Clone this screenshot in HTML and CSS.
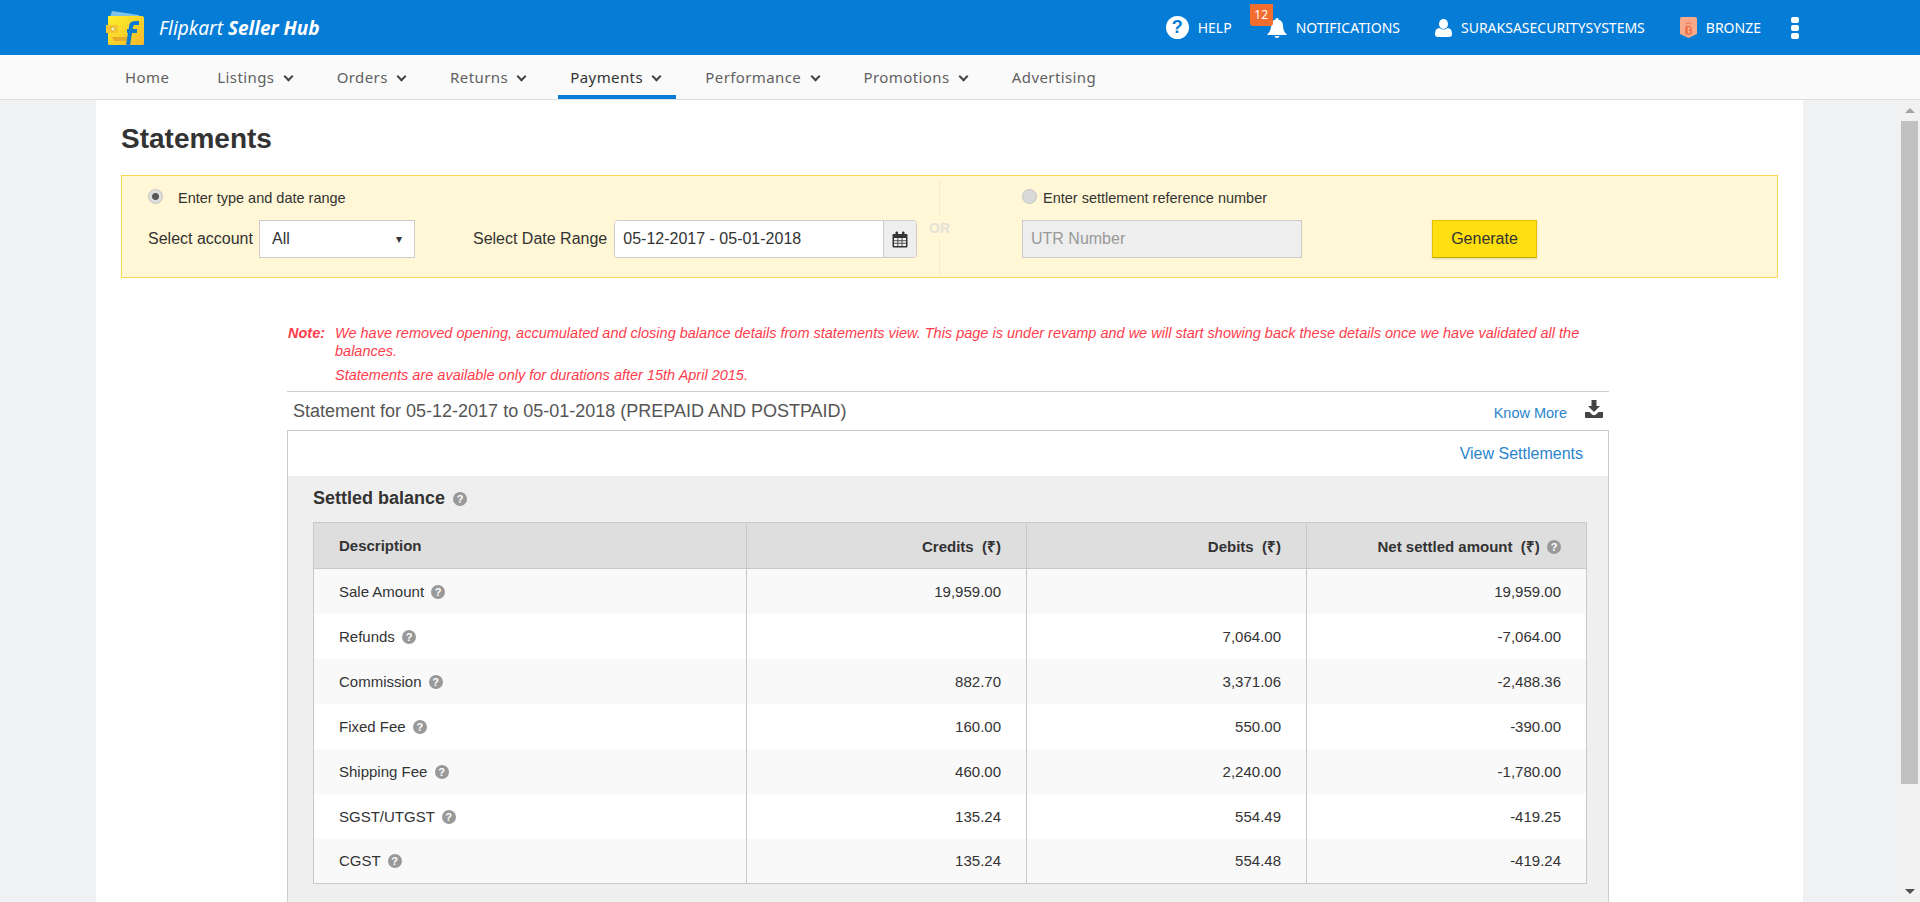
FILE: index.html
```html
<!DOCTYPE html>
<html lang="en">

<head>
    <meta charset="UTF-8">
    <title>Flipkart Seller Hub - Statements</title>
    <link rel="stylesheet" href="styles.css">
</head>

<body>
    <header class="topbar">
        <a class="brand" href="#">
            <svg class="brand-logo" viewBox="0 0 39 36" width="39" height="36">
                <defs>
                    <linearGradient id="wallet" x1="0" y1="0" x2="1" y2="1">
                        <stop offset="0" stop-color="#fff22a" />
                        <stop offset="1" stop-color="#f4b62b" />
                    </linearGradient>
                </defs>
                <path d="M4 7 L6 1 L33 5 L33 8 Z" fill="#7fc4e8" />
                <path d="M2 6 H36 Q38 6 38 8 V34 Q38 35 36 35 H3 Q2 35 2 33 Z" fill="url(#wallet)" />
                <path d="M0 15 H11 Q12 15 12 16 V22 Q12 23 11 23 H0 Z" fill="#f7c52e" />
                <circle cx="7" cy="19" r="2" fill="#fff6b8" stroke="#b99a2c" stroke-width=".6" />
                <path d="M6 27 H22 L20 31 H8 Z" fill="#e7a92a" />
                <path d="M33 13 H29 Q25 13 25 17 L22 35 M21 21 H31" fill="none" stroke="#0a7bd0" stroke-width="4" />
            </svg>
            <span class="brand-name">Flipkart <b>Seller Hub</b></span>
        </a>
        <nav class="user-menu">
            <a class="user-item" href="#">
                <span class="help-icon">?</span>
                HELP
            </a>
            <a class="user-item notif" href="#">
                <span class="notif-count">12</span>
                <svg viewBox="0 0 20 20" width="20" height="20">
                    <path d="M10 0 Q11.6 0 11.8 1.8 Q16 3 16 8 Q16 13 19.5 16 V17 H.5 V16 Q4 13 4 8 Q4 3 8.2 1.8 Q8.4 0 10 0 Z M7.5 18 H12.5 Q12 20 10 20 Q8 20 7.5 18 Z" fill="#fff" />
                </svg>
                NOTIFICATIONS
            </a>
            <a class="user-item" href="#">
                <svg viewBox="0 0 17 18" width="17" height="18">
                    <ellipse cx="8.500" cy="5" rx="4.500" ry="5" fill="#fff" />
                    <path d="M0 15 Q0 9 4.500 9 Q8.500 12 12.500 9 Q17 9 17 15 Q17 18 14 18 H3 Q0 18 0 15 Z" fill="#fff" />
                </svg>
                SURAKSASECURITYSYSTEMS
            </a>
            <a class="user-item" href="#">
                <svg viewBox="0 0 17 21" width="17" height="21">
                    <path d="M2 0 H15 Q17 0 17 2 V17 L8.500 21 L0 17 V2 Q0 0 2 0 Z" fill="#f7a98a" />
                    <path d="M5.500 7 Q8.500 4.500 11.500 7" fill="none" stroke="#e8734a" />
                    <path d="M6 9.500 H9.500 Q11 9.500 11 11.500 Q11 13 9.500 13 Q11.500 13 11.500 15 Q11.500 17 9.500 17 H6 Z M7 10.500 V16" fill="none" stroke="#e8542a" />
                </svg>
                BRONZE
            </a>
            <a class="dots" href="#"><i></i><i></i><i></i></a>
        </nav>
    </header>

    <nav class="mainnav">
        <a class="nav-link nav-home" href="#">Home</a>
        <a class="nav-link" href="#">Listings <span class="chev"></span></a>
        <a class="nav-link" href="#">Orders <span class="chev"></span></a>
        <a class="nav-link" href="#">Returns <span class="chev"></span></a>
        <a class="nav-link active" href="#">Payments <span class="chev"></span></a>
        <a class="nav-link" href="#">Performance <span class="chev"></span></a>
        <a class="nav-link" href="#">Promotions <span class="chev"></span></a>
        <a class="nav-link" href="#">Advertising</a>
    </nav>

    <div class="viewport">
        <main class="page">
            <h1 class="page-title">Statements</h1>

            <section class="filter-box">
                <div class="filter-left">
                    <label class="radio-row"><input type="radio" name="mode" checked> Enter type and date range</label>
                    <div class="filter-fields">
                        <span class="field-label">Select account</span>
                        <div class="select-box">All <span class="select-arrow">▾</span></div>
                        <span class="field-label date-label">Select Date Range</span>
                        <div class="date-group">
                            <input class="date-input" type="text" value="05-12-2017 - 05-01-2018">
                            <span class="date-addon">
                                <svg viewBox="0 0 16 17" width="16" height="17">
                                    <path d="M1.500 3 H14.500 Q15.500 3 15.500 4 V15.500 Q15.500 16.500 14.500 16.500 H1.500 Q.5 16.500 .5 15.500 V4 Q.5 3 1.500 3 Z" fill="#333" />
                                    <path d="M2 7 H14 V15 H2 Z" fill="#eee" />
                                    <path d="M5.800 7 V15 M10 7 V15 M2 9.700 H14 M2 12.300 H14" stroke="#333" stroke-width=".8" />
                                    <rect x="3.500" y="0.500" width="2.500" height="4.500" rx="1" fill="#333" />
                                    <rect x="10" y="0.500" width="2.500" height="4.500" rx="1" fill="#333" />
                                </svg>
                            </span>
                        </div>
                    </div>
                </div>

                <div class="or-split"><span>OR</span></div>

                <div class="filter-right">
                    <label class="radio-row radio-tight"><input type="radio" name="mode"> Enter settlement reference number</label>
                    <input class="utr-input" type="text" placeholder="UTR Number">
                </div>

                <button class="generate-btn" type="button">Generate</button>
            </section>

            <section class="statement">
                <div class="notes">
                    <strong class="note-tag">Note:</strong>
                    <div class="note-text">
                        <p>We have removed opening, accumulated and closing balance details from statements view. This page is under revamp and we will start showing back these details once we have validated all the balances.</p>
                        <p class="note-second">Statements are available only for durations after 15th April 2015.</p>
                    </div>
                </div>

                <div class="statement-head">
                    <span class="statement-title">Statement for 05-12-2017 to 05-01-2018 (PREPAID AND POSTPAID)</span>
                    <a class="know-more" href="#">Know More</a>
                    <svg class="download-icon" viewBox="0 0 18 18" width="18" height="18">
                        <path d="M6.500 0 H11.500 V6 H15 L9 12 L3 6 H6.500 Z" fill="#444" />
                        <path d="M0 12 H4.500 L7 14.500 Q9 16 11 14.500 L13.500 12 H18 V17 Q18 18 17 18 H1 Q0 18 0 17 Z" fill="#444" />
                    </svg>
                </div>

                <div class="card">
                    <div class="card-links"><a href="#">View Settlements</a></div>
                    <div class="card-body">
                        <h2 class="balance-title">Settled balance <span class="hint">?</span></h2>
                        <table class="balance-table">
                            <colgroup>
                                <col class="col-desc">
                                <col class="col-num">
                                <col class="col-num">
                                <col class="col-num">
                            </colgroup>
                            <thead>
                                <tr>
                                    <th>Description</th>
                                    <th class="num">Credits&nbsp; (₹)</th>
                                    <th class="num">Debits&nbsp; (₹)</th>
                                    <th class="num">Net settled amount&nbsp; (₹) <span class="hint">?</span></th>
                                </tr>
                            </thead>
                            <tbody>
                                <tr>
                                    <td>Sale Amount <span class="hint">?</span></td>
                                    <td class="num">19,959.00</td>
                                    <td class="num"></td>
                                    <td class="num">19,959.00</td>
                                </tr>
                                <tr>
                                    <td>Refunds <span class="hint">?</span></td>
                                    <td class="num"></td>
                                    <td class="num">7,064.00</td>
                                    <td class="num">-7,064.00</td>
                                </tr>
                                <tr>
                                    <td>Commission <span class="hint">?</span></td>
                                    <td class="num">882.70</td>
                                    <td class="num">3,371.06</td>
                                    <td class="num">-2,488.36</td>
                                </tr>
                                <tr>
                                    <td>Fixed Fee <span class="hint">?</span></td>
                                    <td class="num">160.00</td>
                                    <td class="num">550.00</td>
                                    <td class="num">-390.00</td>
                                </tr>
                                <tr>
                                    <td>Shipping Fee <span class="hint">?</span></td>
                                    <td class="num">460.00</td>
                                    <td class="num">2,240.00</td>
                                    <td class="num">-1,780.00</td>
                                </tr>
                                <tr>
                                    <td>SGST/UTGST <span class="hint">?</span></td>
                                    <td class="num">135.24</td>
                                    <td class="num">554.49</td>
                                    <td class="num">-419.25</td>
                                </tr>
                                <tr>
                                    <td>CGST <span class="hint">?</span></td>
                                    <td class="num">135.24</td>
                                    <td class="num">554.48</td>
                                    <td class="num">-419.24</td>
                                </tr>
                            </tbody>
                        </table>
                    </div>
                </div>
            </section>
        </main>

        <div class="scroll-rail">
            <span class="arrow-up"></span>
            <span class="scroll-thumb"></span>
            <span class="arrow-down"></span>
        </div>
    </div>
</body>

</html>
```

FILE: styles.css
```css
* {
    box-sizing: border-box;
}

html,
body {
    margin: 0;
    padding: 0;
    height: 100%;
    overflow: hidden;
}

body {
    background: #f0f1f3;
    color: #333;
    font-family: "Liberation Sans", Arial, sans-serif;
    font-size: 15px;
    display: flex;
    flex-direction: column;
}

a {
    text-decoration: none;
    color: inherit;
}

/* top blue bar */
.topbar {
    flex: none;
    height: 55px;
    background: #057cd6;
    color: #fff;
    display: flex;
    align-items: center;
    justify-content: space-between;
    padding: 0 121px 0 106px;
}

.brand {
    display: flex;
    align-items: center;
    gap: 14px;
}

.brand-logo {
    margin-top: 0;
}

.brand-name {
    font-family: "Noto Sans", sans-serif;
    font-style: italic;
    font-size: 19px;
}

.brand-name b {
    font-weight: 700;
}

.user-menu {
    display: flex;
    align-items: center;
    gap: 35px;
    font-family: "Noto Sans", sans-serif;
    font-size: 14px;
}

.user-item {
    display: flex;
    align-items: center;
    gap: 9px;
    position: relative;
}

.help-icon {
    width: 23px;
    height: 23px;
    border-radius: 50%;
    background: #fff;
    color: #057cd6;
    font: bold 18px/23px "Liberation Sans", sans-serif;
    text-align: center;
}

.notif-count {
    position: absolute;
    left: -17px;
    top: -14px;
    width: 23px;
    height: 22px;
    background: #f36d2f;
    border-radius: 0 0 3px 3px;
    font-size: 12px;
    line-height: 22px;
    text-align: center;
}

.dots {
    display: flex;
    flex-direction: column;
    gap: 2px;
    margin-left: -5px;
}

.dots i {
    width: 8px;
    height: 6px;
    border-radius: 2px;
    background: #fff;
}

/* second bar */
.mainnav {
    flex: none;
    height: 45px;
    background: #fafafa;
    border-bottom: 1px solid #ddd;
    display: flex;
    padding-left: 113px;
    gap: 17px;
    font-family: "Noto Sans", sans-serif;
    font-size: 15px;
    letter-spacing: .4px;
    color: #616161;
}

.nav-link {
    height: 44px;
    line-height: 44px;
    padding: 0 14px 0 12px;
    white-space: nowrap;
}

.nav-home {
    margin-right: 5px;
}

.nav-link.active {
    color: #333;
    border-bottom: 4px solid #057cd6;
}

.chev {
    display: inline-block;
    width: 7px;
    height: 7px;
    margin: 0 2px 3px 6px;
    border-right: 2px solid #444;
    border-bottom: 2px solid #444;
    transform: rotate(45deg);
}

/* page area */
.viewport {
    flex: 1;
    min-height: 0;
    display: flex;
    overflow: hidden;
}

.page {
    flex: none;
    width: 1707px;
    margin-left: 96px;
    margin-right: 95px;
    background: #fff;
    padding: 0 25px;
}

.page-title {
    margin: 0;
    padding-top: 22px;
    height: 75px;
    font-size: 28px;
    line-height: 34px;
    font-weight: bold;
}

.filter-box {
    height: 103px;
    background: #fff7d6;
    border: 1px solid #fdd751;
    display: flex;
    position: relative;
    padding-left: 26px;
}

.filter-left {
    width: 791px;
}

.radio-row {
    display: flex;
    align-items: center;
    height: 44px;
    font-size: 14.500px;
}

.radio-row input {
    appearance: none;
    width: 15px;
    height: 15px;
    margin: 0 15px 4px 0;
    border-radius: 50%;
    background: #d9d9d9;
    border: 1px solid #c4c4c4;
}

.radio-row input:checked {
    background: radial-gradient(circle, #555 0 3px, #dedede 4px);
}

.radio-tight input {
    margin-right: 6px;
}

.filter-fields {
    display: flex;
    align-items: center;
}

.field-label {
    font-size: 16px;
}

.select-box {
    width: 156px;
    height: 38px;
    margin-left: 6px;
    padding: 0 12px;
    background: #fff;
    border: 1px solid #ccc;
    display: flex;
    align-items: center;
    justify-content: space-between;
    font-size: 16px;
}

.select-arrow {
    font-size: 12px;
}

.date-label {
    margin-left: 58px;
}

.date-group {
    display: flex;
    width: 303px;
    height: 38px;
    margin-left: 7px;
    border: 1px solid #ccc;
    border-radius: 4px;
    overflow: hidden;
}

.date-input {
    flex: 1;
    min-width: 0;
    border: 0;
    padding: 0 8px;
    background: #fff;
    color: #333;
    font: 16px "Liberation Sans", sans-serif;
}

.date-addon {
    width: 33px;
    background: #eee;
    border-left: 1px solid #ccc;
    display: flex;
    align-items: center;
    justify-content: center;
}

.or-split {
    width: 1px;
    margin: 3px 0 3px 0;
    background: #f1ead0;
    position: relative;
}

.or-split span {
    position: absolute;
    left: -11px;
    top: 37px;
    width: 23px;
    padding: 4px 0;
    background: #fff7d6;
    color: #e4e2d8;
    font-size: 14px;
    font-weight: bold;
    text-align: center;
}

.filter-right {
    width: 410px;
    margin-left: 82px;
}

.utr-input {
    display: block;
    width: 280px;
    height: 38px;
    padding: 0 8px;
    background: #eee;
    border: 1px solid #ccc;
    font: 16px "Liberation Sans", sans-serif;
}

.utr-input::placeholder {
    color: #999;
}

.generate-btn {
    width: 105px;
    height: 38px;
    margin-top: 44px;
    background: #ffdf10;
    border: 1px solid #e4c000;
    border-bottom-color: #c9aa00;
    box-shadow: 0 1px 2px rgba(0, 0, 0, .15);
    color: #333;
    font: 16px "Liberation Sans", sans-serif;
}

.statement {
    margin: 0 169px 0 166px;
}

.notes {
    display: flex;
    padding-top: 46px;
    height: 113px;
    color: #ff3d4d;
    font-size: 14.500px;
    font-style: italic;
    line-height: 18px;
}

.note-tag {
    width: 48px;
    flex: none;
    padding-left: 1px;
}

.note-text {
    width: 1245px;
}

.note-text p {
    margin: 0;
}

.note-text .note-second {
    margin-top: 6px;
}

.statement-head {
    height: 39px;
    border-top: 1px solid #ccc;
    display: flex;
    align-items: center;
    padding: 0 6px 0 6px;
}

.statement-title {
    flex: 1;
    color: #555;
    font-size: 18px;
}

.know-more {
    color: #2a85cc;
    font-size: 14.500px;
    margin: 3px 18px 0 0;
}

.download-icon {
    margin-bottom: 4px;
}

.card {
    border: 1px solid #ccc;
}

.card-links {
    height: 45px;
    padding-right: 25px;
    text-align: right;
    line-height: 45px;
    font-size: 16px;
    color: #2a85cc;
}

.card-body {
    background: #efefef;
    padding: 0 25px 40px;
}

.balance-title {
    margin: 0;
    height: 46px;
    line-height: 44px;
    font-size: 18px;
    font-weight: bold;
}

.hint {
    display: inline-block;
    width: 14px;
    height: 14px;
    margin-left: 3px;
    border-radius: 50%;
    background: #999;
    color: #fff;
    font: bold 11px/14px "Liberation Sans", sans-serif;
    text-align: center;
    vertical-align: 1px;
}

.balance-table {
    width: 1274px;
    table-layout: fixed;
    border-collapse: collapse;
    border: 1px solid #c8c8c8;
    background: #fff;
    font-size: 15px;
}

.col-desc {
    width: 433px;
}

.col-num {
    width: 280px;
}

.balance-table th {
    height: 46px;
    padding: 0 25px;
    background: #dedede;
    border: 1px solid #c8c8c8;
    text-align: left;
}

.balance-table td {
    height: 45px;
    padding: 0 25px;
    border-left: 1px solid #c8c8c8;
}

.balance-table tbody tr:nth-child(odd) {
    background: #f9f9f9;
}

.balance-table .num {
    text-align: right;
}

/* fake scrollbar, sits to the right of the page */
.scroll-rail {
    flex: none;
    width: 22px;
    background: #f1f1f1;
    display: flex;
    flex-direction: column;
    align-items: center;
    padding: 8px 0 8px 1px;
}

.arrow-up {
    border: 5px solid transparent;
    border-top: 0;
    border-bottom: 5px solid #a3a3a3;
    width: 0;
    height: 0;
    margin-bottom: 8px;
}

.scroll-thumb {
    width: 17px;
    height: 663px;
    background: #c1c1c1;
}

.arrow-down {
    margin-top: auto;
    border: 5px solid transparent;
    border-bottom: 0;
    border-top: 5px solid #505050;
    width: 0;
    height: 0;
}
```
